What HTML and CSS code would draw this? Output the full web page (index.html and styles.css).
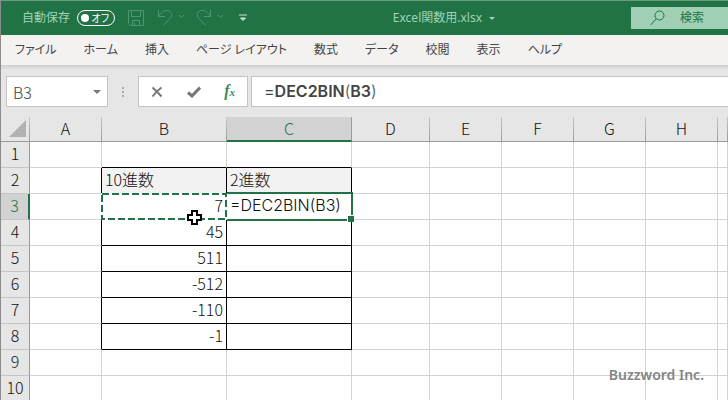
FILE: index.html
```html
<!DOCTYPE html>
<html lang="ja">
<head>
<meta charset="utf-8">
<meta name="viewport" content="width=device-width, initial-scale=1">
<title>Excel関数用.xlsx</title>
<link rel="stylesheet" href="styles.css">
</head>
<body>
<header class="titlebar">
  <div class="quick">
    <span class="autosave">自動保存</span>
    <button class="toggle" type="button" role="switch" aria-checked="false" aria-label="自動保存"><span class="knob"></span><span>オフ</span></button>
    <button class="qbtn save" type="button" aria-label="上書き保存"><svg width="16" height="16" viewBox="0 0 16 16"><path d="M.5.5h15v15h-13l-2-2zM3.500.5v6h9v-6M4.500 15.500v-5h7v5M6.500 13v2"/></svg></button>
    <button class="qbtn undo" type="button" aria-label="元に戻す"><svg width="28" height="18" viewBox="0 0 28 18"><path d="M1.500 1v6.500H8M1.500 7.500C4 3 7 1.500 10 1.500c5 0 6 5 3 8L6.500 16.500M22 6l2.500 2.500L27 6"/></svg></button>
    <button class="qbtn redo" type="button" aria-label="やり直し"><svg width="28" height="18" viewBox="0 0 28 18"><path d="M14.500 1v6.500H8M14.500 7.500C12 3 9 1.500 6 1.500c-5 0-6 5-3 8L9.500 16.500M22 6l2.500 2.500L27 6"/></svg></button>
    <button class="qbtn more" type="button" aria-label="クイックアクセスツールバーのカスタマイズ"><svg width="8" height="8" viewBox="0 0 8 8"><path d="M0 1h8M1.500 4 4 6.500 6.500 4z"/></svg></button>
  </div>
  <button class="filename" type="button">Excel関数用.xlsx<span class="caret"></span></button>
  <label class="search"><svg width="15" height="16" viewBox="0 0 15 16"><circle cx="9.500" cy="5.500" r="4.500"/><path d="M6.300 8.700.7 15"/></svg><input type="text" placeholder="検索" aria-label="検索"></label>
</header>
<nav class="tabs">
  <a href="#">ファイル</a><a href="#">ホーム</a><a href="#">挿入</a><a href="#">ページ レイアウト</a><a href="#">数式</a><a href="#">データ</a><a href="#">校閲</a><a href="#">表示</a><a href="#">ヘルプ</a>
</nav>
<section class="formula">
  <div class="namebox"><input type="text" value="B3" aria-label="名前ボックス"><button type="button" aria-label="名前の一覧"><span class="caret"></span></button></div>
  <div class="grip"><i></i><i></i><i></i></div>
  <div class="actions">
    <button type="button" aria-label="キャンセル"><svg width="12" height="12" viewBox="0 0 12 12"><path d="M1.500 1.500c3 2.500 6 5.500 9 9M10.500 1.500C7 4 4 7 1.500 10.500"/></svg></button>
    <button type="button" aria-label="入力"><svg width="14" height="12" viewBox="0 0 14 12"><path class="check" d="M1 6.500 5 10l8-8.500"/></svg></button>
    <button class="fx" type="button" aria-label="関数の挿入">f<small>x</small></button>
  </div>
  <div class="fbar" role="textbox" aria-label="数式バー" contenteditable="true">=<b>DEC2BIN</b><i>(</i><b>B3</b><i>)</i></div>
</section>
<main class="sheet">
  <table>
    <colgroup><col class="c-row"><col class="c-std"><col class="c-wide"><col class="c-wide"><col class="c-d"><col class="c-std"><col class="c-std"><col class="c-std"><col class="c-std"><col></colgroup>
    <thead><tr><th class="corner"><svg width="17" height="17" viewBox="0 0 17 17"><path d="M17 0v17H0z"/></svg></th><th>A</th><th>B</th><th class="active">C</th><th>D</th><th>E</th><th>F</th><th>G</th><th>H</th><th></th></tr></thead>
    <tbody>
      <tr class="above"><th>1</th><td></td><td class="t"></td><td class="t"></td><td></td><td></td><td></td><td></td><td></td><td></td></tr>
      <tr class="data head"><th>2</th><td></td><td>10進数</td><td>2進数</td><td></td><td></td><td></td><td></td><td></td><td></td></tr>
      <tr class="data current"><th>3</th><td></td><td class="ref">7<svg class="ants"><rect class="under" x="1" y="1"/><rect class="dash" x="1" y="1"/></svg><svg class="cursor" width="15" height="15" viewBox="0 0 15 15"><path d="M5 1h5v4h4v5h-4v4H5v-4H1V5h4z"/></svg></td><td class="edit">=DEC2BIN(B3)<span class="selection"></span></td><td></td><td></td><td></td><td></td><td></td><td></td></tr>
      <tr class="data"><th>4</th><td></td><td>45</td><td></td><td></td><td></td><td></td><td></td><td></td><td></td></tr>
      <tr class="data"><th>5</th><td></td><td>511</td><td></td><td></td><td></td><td></td><td></td><td></td><td></td></tr>
      <tr class="data"><th>6</th><td></td><td>-512</td><td></td><td></td><td></td><td></td><td></td><td></td><td></td></tr>
      <tr class="data"><th>7</th><td></td><td>-110</td><td></td><td></td><td></td><td></td><td></td><td></td><td></td></tr>
      <tr class="data"><th>8</th><td></td><td>-1</td><td></td><td></td><td></td><td></td><td></td><td></td><td></td></tr>
      <tr><th>9</th><td></td><td></td><td></td><td></td><td></td><td></td><td></td><td></td><td></td></tr>
      <tr><th>10</th><td></td><td></td><td></td><td></td><td></td><td></td><td></td><td></td><td></td></tr>
    </tbody>
  </table>
  <div class="credit">Buzzword Inc.</div>
</main>
</body>
</html>
```
FILE: styles.css
```css
* { box-sizing: border-box; }
body {
  margin: 0;
  height: 100vh;
  overflow: hidden;
  display: flex;
  flex-direction: column;
  border-left: 1px solid #8c8c8c;
  background: #e6e6e6;
  color: #444;
  font: 12px/20px "Noto Sans", "Noto Sans CJK JP", sans-serif;
}
button, input { font: inherit; color: inherit; border: 0; padding: 0; margin: 0; background: none; min-width: 0; }
svg { display: block; fill: none; stroke: currentColor; }

.titlebar {
  flex: none;
  display: flex;
  align-items: center;
  height: 35px;
  border-top: 1px solid #6a9a80;
  background: #217346;
  color: #9fd5b5;
}
.quick { display: flex; align-items: center; padding-left: 21px; margin-right: auto; }
.toggle {
  display: flex;
  align-items: center;
  justify-content: space-between;
  width: 38px;
  height: 16px;
  margin-left: 7px;
  padding: 0 5px 0 3px;
  border: 1px solid #fff;
  border-radius: 8px;
  color: #fff;
  font-size: 10px;
  line-height: 14px;
  font-feature-settings: "palt";
}
.knob { width: 8px; height: 8px; border-radius: 50%; background: #fff; }
.qbtn { color: #4d9870; }
.save { margin-left: 13px; }
.undo { margin-left: 13px; }
.redo { margin-left: 11px; }
.more { margin-left: 15px; color: #c4e6d1; }
.more path { fill: currentColor; stroke-width: 1; }
.filename { display: flex; align-items: center; gap: 7px; color: #9fd5b5; margin-right: 136px; }
.caret { border: 3px solid transparent; border-top-color: currentColor; border-bottom: 0; }
.search {
  display: flex;
  align-items: center;
  gap: 15px;
  width: 97px;
  height: 22px;
  padding-left: 19px;
  background: #9fd0b4;
  color: #217346;
}
.search svg { flex: none; }
.search input { width: 40px; }
.search input::placeholder { color: #217346; opacity: 1; }

.tabs {
  flex: none;
  display: flex;
  gap: 27px;
  height: 30px;
  align-items: center;
  padding-left: 14px;
  background: #f3f2f1;
  font-feature-settings: "palt";
  white-space: nowrap;
}
.tabs a { color: #444; text-decoration: none; }

.formula {
  flex: none;
  display: flex;
  height: 52px;
  padding: 11px 0 10px 5px;
  background: linear-gradient(#cfcece, #e6e6e6 5px);
}
.namebox, .actions, .fbar { background: #fff; border: 1px solid #c3c3c3; }
.namebox { display: flex; align-items: center; width: 102px; padding: 0 6px; font: 300 16px/24px "Noto Sans CJK JP", sans-serif; }
.namebox input { flex: 1; width: 20px; }
.namebox button { color: #777; }
.namebox .caret { display: block; border-width: 4px 4px 0; }
.grip { display: flex; flex-direction: column; justify-content: center; gap: 2px; width: 30px; align-items: center; }
.grip i { width: 2px; height: 2px; background: #aaa; }
.actions { display: flex; align-items: center; justify-content: space-between; width: 110px; padding: 0 12px; color: #777; }
.actions path { stroke-width: 2; }
.actions .check { stroke-width: 3; }
.fx { color: #3e8a5e; font: italic bold 16px/20px "Liberation Serif", serif; }
.fx small { font-size: 11px; }
.fbar { flex: 1; margin-left: 3px; padding: 2px 12px; border-right: 0; font: 16px/24px Inter, "Noto Sans CJK JP", sans-serif; outline: 0; }
.fbar b { font-weight: 600; }
.fbar i { font-style: normal; font-weight: 300; }

.sheet { flex: 1; min-height: 0; position: relative; overflow: hidden; background: #e6e6e6; }
table { width: 100%; table-layout: fixed; border-collapse: separate; border-spacing: 0; color: #111; font: 300 16px/22px "Noto Sans CJK JP", sans-serif; }
.c-row { width: 29px; }
.c-std { width: 72px; }
.c-wide { width: 125px; }
.c-d { width: 78px; }
th, td { height: 26px; padding: 0 3px 3px; border: 0 solid #d2d2d2; border-width: 0 1px 1px 0; white-space: nowrap; }
th { background: #e6e6e6; font-weight: 300; text-align: center; }
tbody th { border-color: #c6c6c6 #999 #c6c6c6; }
thead th { height: 25px; padding-bottom: 2px; line-height: 20px; border-color: #999; border-image: linear-gradient(#c8c8c8, #999) 1; }
td { background: #fff; }
.corner svg { margin-left: 5px; fill: #b2b2b2; stroke: none; }
thead .active { border-image: none; border-bottom: 2px solid #217346; background: #d2d2d2; color: #217346; }
.current th { border-right: 2px solid #217346; background: #d2d2d2; color: #217346; }
.above .t { border-bottom-color: #000; }
.data td:nth-child(2) { border-right-color: #000; }
.data td:nth-child(3), .data td:nth-child(4) { border-color: #000; }
.data td:nth-child(3) { text-align: right; }
.head td:nth-child(3), .head td:nth-child(4) { background: #f2f2f2; }
.data.head td { text-align: left; }
.ref, .edit { position: relative; }
.edit { font-family: Inter, sans-serif; }
.ants { position: absolute; left: -1px; top: -1px; width: calc(100% + 2px); height: calc(100% + 2px); }
.ants rect { width: calc(100% - 2px); height: calc(100% - 2px); stroke-width: 2; }
.ants .under { stroke: #fff; }
.ants .dash { stroke: #217346; stroke-dasharray: 7 3; }
.cursor { position: absolute; right: 24px; bottom: -6px; z-index: 3; fill: #fff; stroke: #000; stroke-width: 2; }
.selection { position: absolute; inset: -2px -2px -2px 0; border: 2px solid #217346; border-left: 0; }
.selection::after { content: ""; position: absolute; right: -3px; bottom: -3px; width: 6px; height: 6px; border: 1px solid #fff; border-width: 1px 0 0 1px; background: #217346; }
.credit { position: absolute; right: 24px; bottom: 15px; color: #858585; font: 600 14px/20px "Noto Sans", sans-serif; }
```
